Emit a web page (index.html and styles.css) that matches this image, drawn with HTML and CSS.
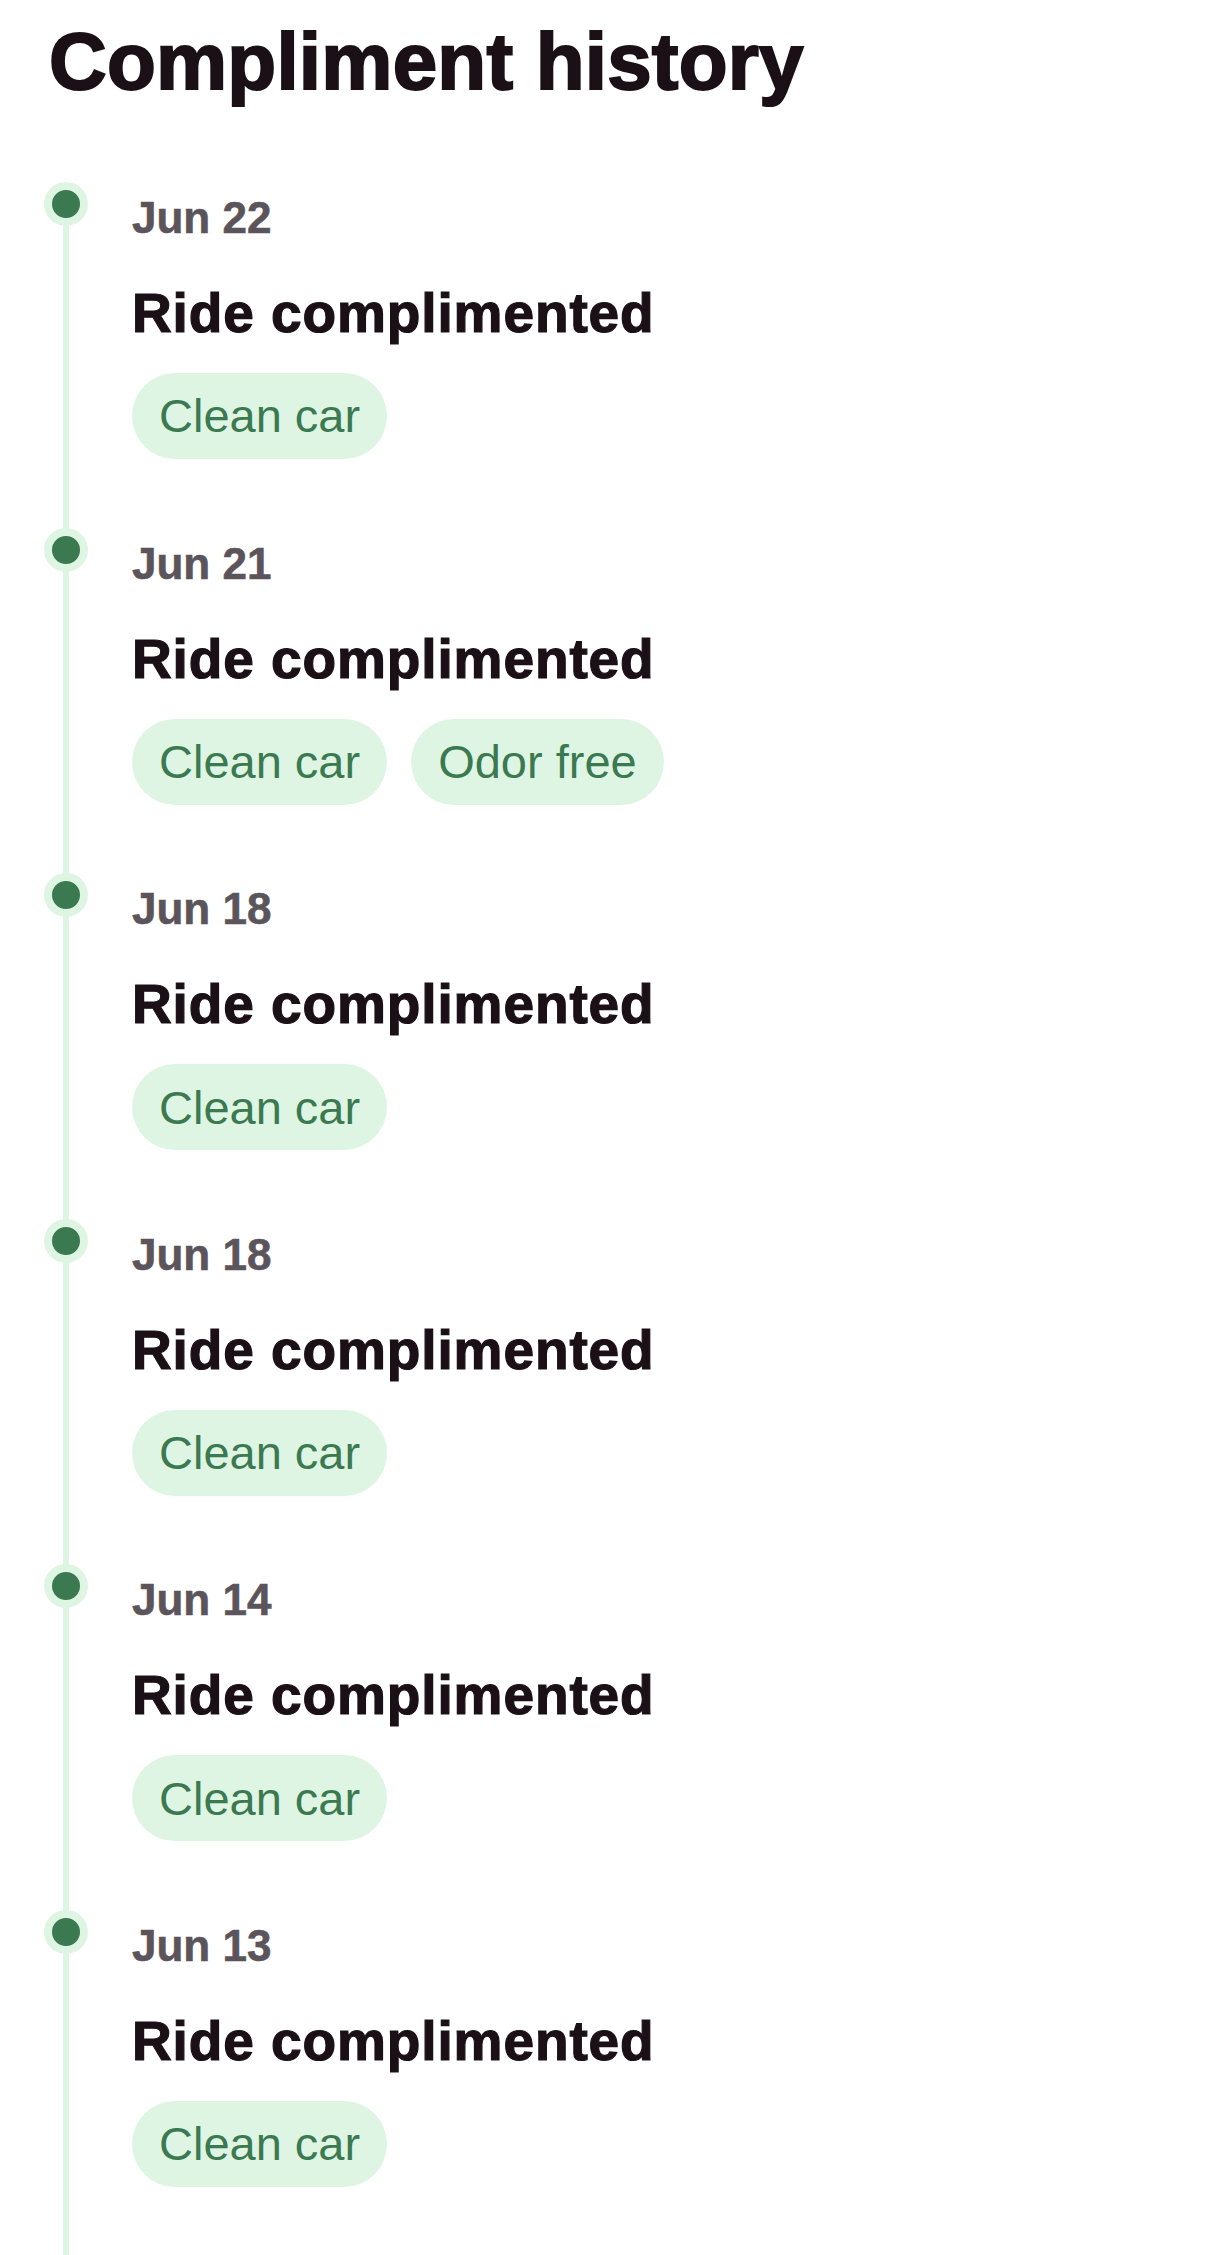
FILE: index.html
```html
<!DOCTYPE html>
<html lang="en">
<head>
<meta charset="utf-8">
<title>Compliment history</title>
<link rel="stylesheet" href="styles.css">
</head>
<body>
<main class="page">
  <h1 class="page-title">Compliment history</h1>
  <ol class="timeline">
    <li class="item">
      <div class="rail"><span class="dot"></span></div>
      <div class="content">
        <div class="date">Jun 22</div>
        <div class="event">Ride complimented</div>
        <div class="chips"><span class="chip">Clean car</span></div>
      </div>
    </li>
    <li class="item">
      <div class="rail"><span class="dot"></span></div>
      <div class="content">
        <div class="date">Jun 21</div>
        <div class="event">Ride complimented</div>
        <div class="chips"><span class="chip">Clean car</span><span class="chip">Odor free</span></div>
      </div>
    </li>
    <li class="item">
      <div class="rail"><span class="dot"></span></div>
      <div class="content">
        <div class="date">Jun 18</div>
        <div class="event">Ride complimented</div>
        <div class="chips"><span class="chip">Clean car</span></div>
      </div>
    </li>
    <li class="item">
      <div class="rail"><span class="dot"></span></div>
      <div class="content">
        <div class="date">Jun 18</div>
        <div class="event">Ride complimented</div>
        <div class="chips"><span class="chip">Clean car</span></div>
      </div>
    </li>
    <li class="item">
      <div class="rail"><span class="dot"></span></div>
      <div class="content">
        <div class="date">Jun 14</div>
        <div class="event">Ride complimented</div>
        <div class="chips"><span class="chip">Clean car</span></div>
      </div>
    </li>
    <li class="item">
      <div class="rail"><span class="dot"></span></div>
      <div class="content">
        <div class="date">Jun 13</div>
        <div class="event">Ride complimented</div>
        <div class="chips"><span class="chip">Clean car</span></div>
      </div>
    </li>
  </ol>
</main>
</body>
</html>
```
FILE: styles.css
```css
html, body {
  margin: 0;
  padding: 0;
  background: #ffffff;
}

body {
  font-family: "Liberation Sans", Arial, sans-serif;
  overflow: hidden;
}

.page {
  min-height: 100vh;
  display: flex;
  flex-direction: column;
  box-sizing: border-box;
  padding-top: 21.6px;
}

.page-title {
  margin: 0 0 0 49px;
  font-size: 80px;
  line-height: 80px;
  font-weight: 700;
  letter-spacing: 0.2px;
  color: #1a1015;
  -webkit-text-stroke: 2px #1a1015;
}

.timeline {
  list-style: none;
  margin: 80.4px 0 0 0;
  padding: 0;
  flex: 1;
  background-image: linear-gradient(#dff5e4, #dff5e4);
  background-repeat: no-repeat;
  background-position: 63px 22px;
  background-size: 6px 100%;
}

.item {
  display: grid;
  grid-template-columns: 132px 1fr;
  padding-bottom: 68.6px;
}

.item:last-child {
  padding-bottom: 30px;
}

.rail {
  display: flex;
  justify-content: center;
  align-items: flex-start;
}

.dot {
  width: 44px;
  height: 44px;
  box-sizing: border-box;
  border-radius: 50%;
  background: #3b7a51;
  border: 8px solid #dff5e4;
}

.content {
  padding-top: 10px;
  display: flex;
  flex-direction: column;
  align-items: flex-start;
}

.date {
  font-size: 44px;
  line-height: 52px;
  font-weight: 700;
  color: #5b545b;
  -webkit-text-stroke: 0.6px #5b545b;
}

.event {
  margin-top: 37px;
  font-size: 55px;
  line-height: 64px;
  font-weight: 700;
  letter-spacing: 0.9px;
  color: #1a1015;
  -webkit-text-stroke: 1.2px #1a1015;
}

.chips {
  margin-top: 28px;
  display: flex;
  gap: 24px;
}

.chip {
  height: 86px;
  display: inline-flex;
  align-items: center;
  padding: 0 27px;
  border-radius: 43px;
  background: #dff5e4;
  color: #3b7a51;
  font-size: 47px;
  font-weight: 400;
}
```
